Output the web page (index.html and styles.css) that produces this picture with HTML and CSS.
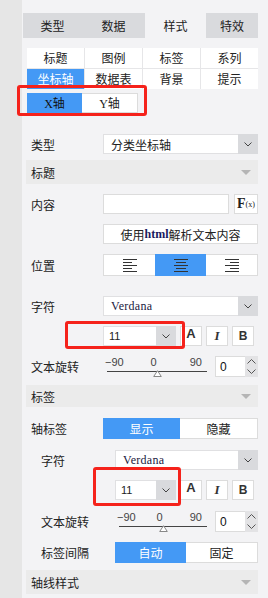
FILE: index.html
```html
<!DOCTYPE html>
<html lang="zh-CN">
<head>
    <meta charset="UTF-8">
    <meta name="viewport" content="width=device-width, initial-scale=1.0">
    <title>样式 - 坐标轴</title>
    <link rel="stylesheet" href="styles.css">
</head>
<body>
    <div class="app">
        <div class="strip"></div>
        <div class="panel">
            <div class="tabs">
                <div class="tab">类型</div>
                <div class="tab">数据</div>
                <div class="tab active">样式</div>
                <div class="tab">特效</div>
            </div>

            <div class="subtabs">
                <div class="sub">标题</div>
                <div class="sub">图例</div>
                <div class="sub">标签</div>
                <div class="sub">系列</div>
                <div class="sub on">坐标轴</div>
                <div class="sub">数据表</div>
                <div class="sub">背景</div>
                <div class="sub">提示</div>
            </div>

            <div class="axis-toggle mark mark-axis">
                <div class="seg on">X轴</div>
                <div class="seg">Y轴</div>
            </div>

            <div class="row r-type">
                <span class="label">类型</span>
                <div class="select">
                    <span class="val">分类坐标轴</span>
                    <span class="arrow"><svg width="8" height="5" viewBox="0 0 8 5"><path d="M0.5 0.5 L4 4 L7.5 0.5" fill="none" stroke="#444" stroke-width="1"/></svg></span>
                </div>
            </div>

            <div class="header h-title">标题<span class="caret"></span></div>

            <div class="row r-content">
                <span class="label">内容</span>
                <div class="textbox"></div>
                <div class="fx"><b>F</b><small>(x)</small></div>
            </div>

            <div class="row r-html">
                <span class="label"></span>
                <div class="btn">使用<span class="mono">html</span>解析文本内容</div>
            </div>

            <div class="row r-pos">
                <span class="label">位置</span>
                <div class="align-group">
                    <div class="align left">
                        <svg width="14" height="13" viewBox="0 0 14 13"><g stroke="#333" stroke-width="1"><path d="M0 0.5H14M0 3.5H9M0 6.5H14M0 9.5H9M0 12.5H14"/></g></svg>
                    </div>
                    <div class="align on">
                        <svg width="14" height="13" viewBox="0 0 14 13"><g stroke="#333" stroke-width="1"><path d="M0 0.5H14M2 3.5H12M0 6.5H14M2 9.5H12M0 12.5H14"/></g></svg>
                    </div>
                    <div class="align right">
                        <svg width="14" height="13" viewBox="0 0 14 13"><g stroke="#333" stroke-width="1"><path d="M0 0.5H14M5 3.5H14M0 6.5H14M5 9.5H14M0 12.5H14"/></g></svg>
                    </div>
                </div>
            </div>

            <div class="row r-font">
                <span class="label">字符</span>
                <div class="select">
                    <span class="val font-name">Verdana</span>
                    <span class="arrow"><svg width="8" height="5" viewBox="0 0 8 5"><path d="M0.5 0.5 L4 4 L7.5 0.5" fill="none" stroke="#444" stroke-width="1"/></svg></span>
                </div>
            </div>

            <div class="row r-size">
                <span class="label"></span>
                <div class="select size mark mark-size1">
                    <span class="val">11</span>
                    <span class="arrow"><svg width="8" height="5" viewBox="0 0 8 5"><path d="M0.5 0.5 L4 4 L7.5 0.5" fill="none" stroke="#444" stroke-width="1"/></svg></span>
                </div>
                <div class="style-btn a">A</div>
                <div class="style-btn i">I</div>
                <div class="style-btn b">B</div>
            </div>

            <div class="row r-rot">
                <span class="label">文本旋转</span>
                <div class="slider">
                    <div class="ticks"><span>−90</span><span>0</span><span>90</span></div>
                    <div class="track">
                        <svg class="thumb" width="9" height="7" viewBox="0 0 9 7"><path d="M4.5 0.7 L8.3 6.5 L0.7 6.5 Z" fill="#fff" stroke="#888" stroke-width="1"/></svg>
                    </div>
                </div>
                <div class="numbox">
                    <span class="num">0</span>
                    <span class="spin">
                        <svg width="9" height="5" viewBox="0 0 9 5"><path d="M0.5 4.5 L4.5 0.5 L8.5 4.5" fill="none" stroke="#555" stroke-width="1"/></svg>
                        <svg width="9" height="5" viewBox="0 0 9 5"><path d="M0.5 0.5 L4.5 4.5 L8.5 0.5" fill="none" stroke="#555" stroke-width="1"/></svg>
                    </span>
                </div>
            </div>

            <div class="header h-label">标签<span class="caret"></span></div>

            <div class="row r-axislabel">
                <span class="label">轴标签</span>
                <div class="switch">
                    <div class="seg on">显示</div>
                    <div class="seg">隐藏</div>
                </div>
            </div>

            <div class="row sub-row r-font2">
                <span class="label">字符</span>
                <div class="select">
                    <span class="val font-name">Verdana</span>
                    <span class="arrow"><svg width="8" height="5" viewBox="0 0 8 5"><path d="M0.5 0.5 L4 4 L7.5 0.5" fill="none" stroke="#444" stroke-width="1"/></svg></span>
                </div>
            </div>

            <div class="row sub-row r-size2">
                <span class="label"></span>
                <div class="select size mark mark-size2">
                    <span class="val">11</span>
                    <span class="arrow"><svg width="8" height="5" viewBox="0 0 8 5"><path d="M0.5 0.5 L4 4 L7.5 0.5" fill="none" stroke="#444" stroke-width="1"/></svg></span>
                </div>
                <div class="style-btn a">A</div>
                <div class="style-btn i">I</div>
                <div class="style-btn b">B</div>
            </div>

            <div class="row sub-row r-rot2">
                <span class="label">文本旋转</span>
                <div class="slider">
                    <div class="ticks"><span>−90</span><span>0</span><span>90</span></div>
                    <div class="track">
                        <svg class="thumb" width="9" height="7" viewBox="0 0 9 7"><path d="M4.5 0.7 L8.3 6.5 L0.7 6.5 Z" fill="#fff" stroke="#888" stroke-width="1"/></svg>
                    </div>
                </div>
                <div class="numbox">
                    <span class="num">0</span>
                    <span class="spin">
                        <svg width="9" height="5" viewBox="0 0 9 5"><path d="M0.5 4.5 L4.5 0.5 L8.5 4.5" fill="none" stroke="#555" stroke-width="1"/></svg>
                        <svg width="9" height="5" viewBox="0 0 9 5"><path d="M0.5 0.5 L4.5 4.5 L8.5 0.5" fill="none" stroke="#555" stroke-width="1"/></svg>
                    </span>
                </div>
            </div>

            <div class="row sub-row r-gap">
                <span class="label">标签间隔</span>
                <div class="switch">
                    <div class="seg on">自动</div>
                    <div class="seg">固定</div>
                </div>
            </div>

            <div class="header h-line">轴线样式<span class="caret"></span></div>
        </div>
    </div>
</body>
</html>
```

FILE: styles.css
```css
* {
    margin: 0;
    padding: 0;
    box-sizing: border-box;
}
body {
    font-family: "Noto Sans CJK SC", "Noto Sans", sans-serif;
    font-size: 12px;
    color: #222;
    background: #f3f3f5;
}
.app {
    display: flex;
    width: 268px;
    height: 598px;
    overflow: hidden;
}
.strip {
    width: 22px;
    flex: none;
    background: #e6e6e6;
}
.panel {
    flex: 1;
    background: #f3f3f5;
    padding: 0 10px 0 1px;
    display: flex;
    flex-direction: column;
}

/* top tabs */
.tabs {
    display: grid;
    grid-template-columns: 59px 63px 61px 52px;
    height: 25px;
    margin-top: 13px;
}
.tab {
    background: #d9dadd;
    display: flex;
    align-items: center;
    justify-content: center;
    font-size: 12px;
    color: #222;
}
.tab.active {
    background: #f3f3f5;
}

/* sub tabs */
.subtabs {
    margin: 10px 0 0 4px;
    display: grid;
    grid-template-columns: repeat(4, 1fr);
    grid-template-rows: 20px 20px;
    gap: 1px;
    background: #e6e6e8;
}
.sub {
    background: #fff;
    display: flex;
    align-items: center;
    justify-content: center;
    line-height: 1;
}
.sub.on {
    background: #4499f5;
    color: #fff;
}

/* red markers drawn over controls */
.mark {
    position: relative;
}
.mark::after {
    content: "";
    position: absolute;
    border: 3px solid #f5221b;
    border-radius: 3px;
    pointer-events: none;
}
.mark-axis::after {
    left: -11px;
    right: -10px;
    top: -9px;
    bottom: -4px;
}
.mark-size1::after {
    left: -39px;
    right: -10px;
    top: -6px;
    bottom: -4px;
}
.mark-size2::after {
    left: -23px;
    right: -6px;
    top: -14px;
    bottom: -7px;
}

/* X / Y toggle */
.axis-toggle {
    margin: 4px 0 0 4px;
    width: 111px;
    height: 20px;
    display: flex;
    border: 1px solid #dcdcdc;
    background: #fff;
}
.axis-toggle .seg {
    flex: 1;
    display: flex;
    align-items: center;
    justify-content: center;
    font-family: "Liberation Serif", "Noto Sans CJK SC", serif;
    font-size: 12px;
}
.axis-toggle .seg.on {
    background: #4499f5;
    color: #111;
    margin: -1px 0 -1px -1px;
}

/* form rows */
.row {
    display: flex;
    align-items: center;
    height: 20px;
    margin-top: 10px;
    padding-left: 8px;
}
.row .label {
    width: 72px;
    flex: none;
}
.row.sub-row {
    padding-left: 18px;
}
.row.sub-row .label {
    width: 74px;
}
.r-type { margin-top: 21px; }
.r-pos { height: 22px; }
.r-font { margin-top: 20px; }
.r-rot { height: 21px; }
.r-axislabel { margin-top: 11px; height: 21px; }
.r-font2 { margin-top: 11px; }
.r-rot2 { margin-top: 11px; height: 21px; }
.r-gap { height: 21px; }

.select {
    flex: 1;
    height: 100%;
    display: flex;
    background: #fff;
    border: 1px solid #e0e0e2;
}
.select .val {
    flex: 1;
    display: flex;
    align-items: center;
    padding-left: 7px;
    white-space: nowrap;
}
.select .arrow {
    width: 20px;
    margin: -1px -1px -1px 0;
    background: #d9dadd;
    display: flex;
    align-items: center;
    justify-content: center;
}
.select.size {
    flex: none;
    width: 73px;
}
.sub-row .select.size {
    width: 61px;
}
.select.size .val {
    padding-left: 5px;
    font-family: "Liberation Sans", sans-serif;
    font-size: 11px;
}
.select .font-name {
    font-family: "Liberation Serif", serif;
    font-size: 12px;
    letter-spacing: 0.3px;
    color: #1a1a40;
}
.mono {
    font-family: "Liberation Serif", serif;
    font-size: 12px;
    font-weight: bold;
    color: #1a1a60;
}

.header {
    margin: 6px 0 0 3px;
    height: 24px;
    padding: 0 7px 0 5px;
    background: #ebebeb;
    display: flex;
    align-items: center;
    justify-content: space-between;
}
.h-label {
    margin-top: 8px;
    height: 22px;
}
.h-line {
    margin-top: 7px;
}
.caret {
    width: 0;
    height: 0;
    border-left: 5px solid transparent;
    border-right: 5px solid transparent;
    border-top: 5px solid #b5b5b5;
}

.textbox {
    width: 126px;
    height: 100%;
    background: #fff;
    border: 1px solid #dcdcdc;
}
.fx {
    width: 24px;
    height: 100%;
    margin-left: 5px;
    background: #fff;
    border: 1px solid #dcdcdc;
    display: flex;
    align-items: center;
    justify-content: center;
    font-family: "Liberation Serif", serif;
    color: #222;
}
.fx b {
    font-size: 14px;
}
.fx small {
    font-size: 8px;
}

.btn {
    flex: 1;
    height: 100%;
    background: #fff;
    border: 1px solid #dcdcdc;
    display: flex;
    align-items: center;
    justify-content: center;
    white-space: nowrap;
}

.align-group {
    flex: 1;
    height: 100%;
    display: flex;
    background: #fff;
    border: 1px solid #dcdcdc;
}
.align {
    flex: 1;
    display: flex;
    align-items: center;
    justify-content: center;
}
.align.on {
    background: #4499f5;
    margin: -1px 0;
}

.style-btn {
    width: 22px;
    height: 100%;
    background: #fff;
    border: 1px solid #dcdcdc;
    display: flex;
    align-items: center;
    justify-content: center;
    margin-left: 4px;
    color: #333;
}
.style-btn.a {
    font-family: "Liberation Sans", sans-serif;
    font-weight: bold;
    font-size: 13px;
    align-items: flex-start;
    line-height: 14px;
}
.style-btn.i {
    font-family: "Liberation Serif", serif;
    font-style: italic;
    font-weight: bold;
    font-size: 13px;
}
.style-btn.b {
    font-family: "Liberation Sans", sans-serif;
    font-weight: bold;
    font-size: 12px;
}

.slider {
    flex: 1;
    height: 100%;
    margin-right: 8px;
    display: flex;
    flex-direction: column;
}
.ticks {
    display: grid;
    grid-template-columns: 1fr auto 1fr;
    font-family: "Liberation Sans", sans-serif;
    font-size: 11px;
    line-height: 12px;
    color: #444;
    padding: 0 5px 0 2px;
}
.ticks span:first-child { text-align: left; }
.ticks span:last-child { text-align: right; }
.track {
    position: relative;
    height: 1px;
    margin: 3px 0 0 4px;
    background: #444;
}
.thumb {
    position: absolute;
    left: 50%;
    top: -1px;
    margin-left: -4.5px;
    display: block;
}

.numbox {
    width: 43px;
    height: 100%;
    background: #fff;
    border: 1px solid #dcdcdc;
    display: flex;
}
.numbox .num {
    flex: 1;
    display: flex;
    align-items: center;
    padding-left: 4px;
    font-family: "Liberation Sans", sans-serif;
    font-size: 12px;
    color: #111;
}
.spin {
    width: 13px;
    margin: -1px -1px -1px 0;
    background: #e3e3e5;
    display: flex;
    flex-direction: column;
    align-items: center;
    justify-content: space-around;
}

.switch {
    flex: 1;
    height: 100%;
    display: flex;
    background: #fff;
    border: 1px solid #dcdcdc;
}
.switch .seg {
    flex: 1;
    display: flex;
    align-items: center;
    justify-content: center;
    font-size: 12px;
}
.switch .seg.on {
    background: #4499f5;
    color: #fff;
    margin: -1px 0 -1px -1px;
}
```
